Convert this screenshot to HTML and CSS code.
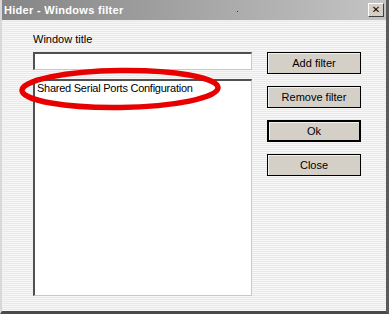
FILE: index.html
```html
<!DOCTYPE html>
<html>
<head>
<meta charset="utf-8">
<link rel="stylesheet" href="styles.css">
</head>
<body>
<div class="window">
  <div class="titlebar">
    <span class="title">Hider - Windows filter</span>
    <span class="dot"></span>
    <button class="close">&#x2715;</button>
  </div>
  <div class="content">
    <div class="left">
      <div class="label">Window title</div>
      <div class="input"></div>
      <div class="list">
        <div class="item">Shared Serial Ports Configuration</div>
      </div>
    </div>
    <div class="buttons">
      <div class="btn">Add filter</div>
      <div class="btn">Remove filter</div>
      <div class="btn default">Ok</div>
      <div class="btn">Close</div>
    </div>
    <svg class="mark" width="220" height="56" viewBox="0 0 220 56">
      <ellipse cx="104" cy="25" rx="98" ry="18.5" fill="none" stroke="#e80000" stroke-width="5.5" transform="rotate(-0.8 104 25)"/>
    </svg>
  </div>
</div>
</body>
</html>
```
FILE: styles.css
```css
html, body {
  margin: 0;
  padding: 0;
}
body {
  width: 389px;
  height: 314px;
  overflow: hidden;
  font-family: "Liberation Sans", Arial, sans-serif;
  font-size: 11px;
  color: #000;
}
.window {
  width: 389px;
  height: 314px;
  box-sizing: border-box;
  border-left: 2px solid #d8d8d8;
  border-right: 3px solid #5a5a5a;
  border-bottom: 3px solid #4a4a4a;
  display: flex;
  flex-direction: column;
  background: repeating-linear-gradient(to bottom, #f7f7f7 0px, #f7f7f7 1px, #e9e9e9 1px, #e9e9e9 2px);
}
.titlebar {
  height: 21px;
  flex: none;
  display: flex;
  align-items: center;
  background: linear-gradient(to right, #858585 0%, #a5a5a5 50%, #c4c4c4 100%);
  border-bottom: 1px solid #f0f0f0;
  box-sizing: border-box;
  position: relative;
}
.title {
  color: #fff;
  font-weight: bold;
  font-size: 11px;
  padding-left: 2px;
  letter-spacing: 0.3px;
}
.dot {
  position: absolute;
  left: 235px;
  top: 11px;
  width: 1px;
  height: 1px;
  background: #333;
}
.close {
  margin-left: auto;
  margin-right: 2px;
  width: 16px;
  height: 14px;
  padding: 0;
  border: 1px solid;
  border-color: #fff #404040 #404040 #fff;
  background: #d4d0c8;
  font-family: "DejaVu Sans", sans-serif;
  font-size: 10px;
  font-weight: bold;
  line-height: 12px;
  color: #000;
}
.content {
  flex: 1;
  position: relative;
  display: flex;
  padding: 12px 0 0 31px;
  gap: 15px;
}
.left {
  width: 219px;
  display: flex;
  flex-direction: column;
}
.label {
  line-height: 13px;
  height: 13px;
}
.input {
  margin-top: 6px;
  height: 18px;
  box-sizing: border-box;
  background: #fff;
  border: 1px solid;
  border-color: #505050 #c8c8c8 #c8c8c8 #505050;
  border-top-width: 2px;
  border-left-width: 2px;
}
.list {
  margin-top: 9px;
  height: 217px;
  box-sizing: border-box;
  background: #fff;
  border: 1px solid;
  border-color: #505050 #c8c8c8 #c8c8c8 #505050;
  border-top-width: 2px;
  border-left-width: 2px;
  padding: 0 0 0 2px;
}
.item {
  line-height: 14px;
  letter-spacing: -0.25px;
}
.buttons {
  margin-top: 19px;
  display: flex;
  flex-direction: column;
  gap: 12px;
}
.btn {
  width: 94px;
  height: 22px;
  box-sizing: border-box;
  border: 1px solid #000;
  background: #d4d0c8;
  box-shadow: inset 1px 1px 0 #f0f0f0;
  display: flex;
  align-items: center;
  justify-content: center;
  font-size: 11px;
}
.btn.default {
  border-width: 2px;
}
.mark {
  position: absolute;
  left: 14px;
  top: 43px;
}
```
